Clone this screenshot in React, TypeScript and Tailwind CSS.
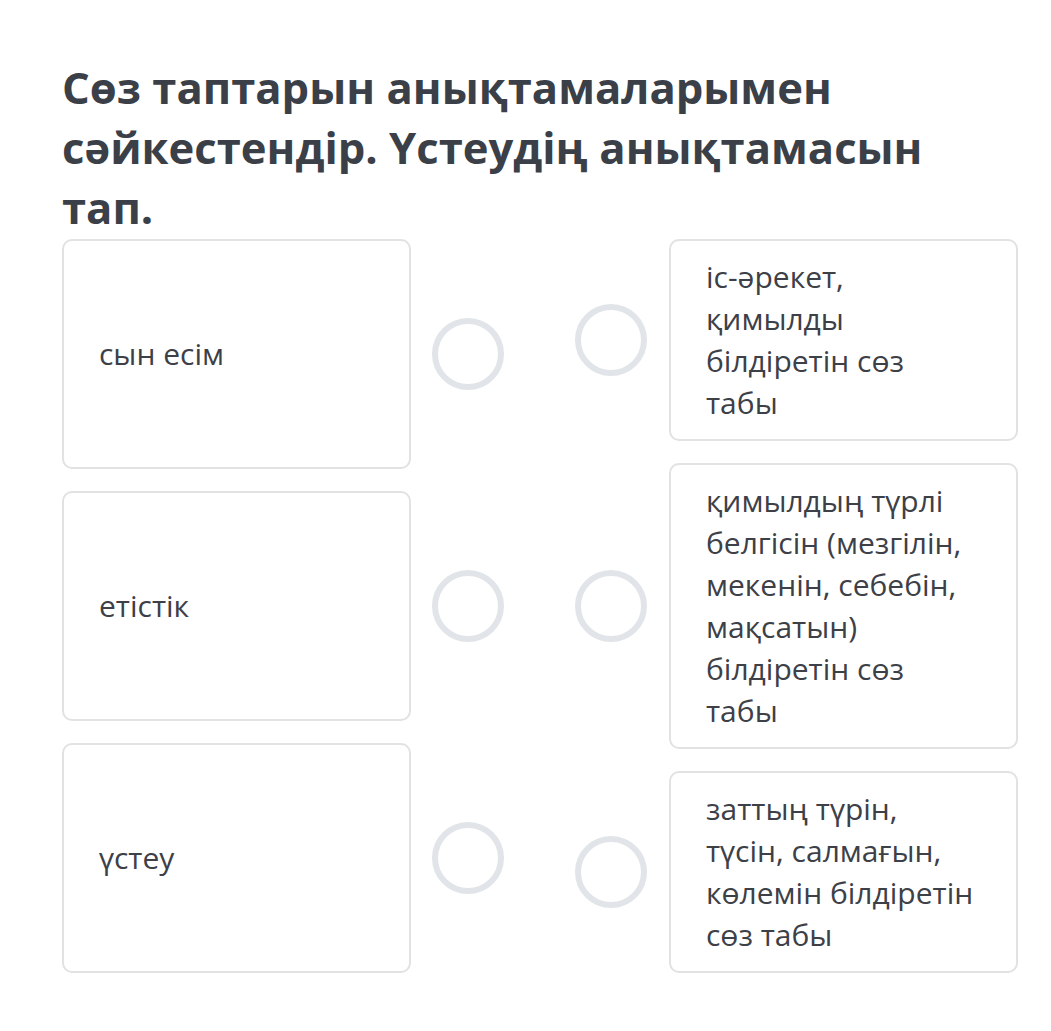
const terms = ["сын есім", "етістік", "үстеу"];

const definitions = [
  "іс-әрекет, қимылды білдіретін сөз табы",
  "қимылдың түрлі белгісін (мезгілін, мекенін, себебін, мақсатын) білдіретін сөз табы",
  "заттың түрін, түсін, салмағын, көлемін білдіретін сөз табы",
];

const Dot = () => (
  <div className="w-[72px] h-[72px] shrink-0 rounded-full border-[6px] border-[#e1e4e8] bg-white" />
);

export default function App() {
  return (
    <main
      className="min-h-[1031px] bg-white pl-[62px] pr-[33px] pt-[57px] text-[#3d4047]"
      style={{ fontFamily: '"Open Sans", "Noto Sans", sans-serif' }}
    >
      <h1 className="w-[900px] text-[43.6px] font-bold leading-[60px] text-[#3b3f47] mb-[2px]">
        Сөз таптарын анықтамаларымен сәйкестендір. Үстеудің анықтамасын тап.
      </h1>

      <section className="flex gap-[71px] items-stretch">
        {/* left column: terms */}
        <div className="flex flex-col gap-[22px]">
          {terms.map((t) => (
            <div key={t} className="flex flex-1 items-center gap-[21px]">
              <div className="w-[349px] self-stretch flex items-center px-[35px] border-2 border-[#e2e2e2] rounded-[10px] text-[30px] leading-[42px]">
                {t}
              </div>
              <Dot />
            </div>
          ))}
        </div>

        {/* right column: definitions */}
        <div className="flex flex-col gap-[22px]">
          {definitions.map((d) => (
            <div key={d} className="flex items-center gap-[22px]">
              <Dot />
              <div className="w-[349px] px-[35px] py-[15px] border-2 border-[#e2e2e2] rounded-[10px] text-[30px] leading-[42px]">
                {d}
              </div>
            </div>
          ))}
        </div>
      </section>
    </main>
  );
}
